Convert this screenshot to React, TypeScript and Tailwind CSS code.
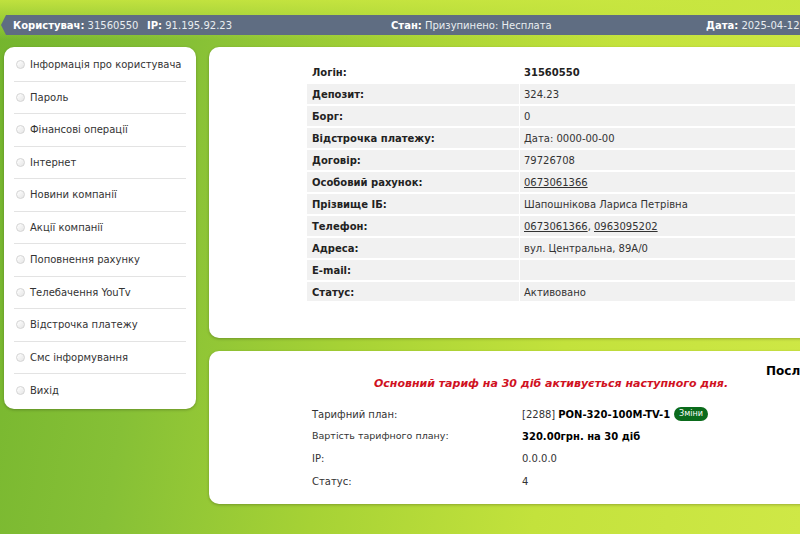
import React from 'react';

const menu = [
  'Інформація про користувача',
  'Пароль',
  'Фінансові операції',
  'Інтернет',
  'Новини компанії',
  'Акції компанії',
  'Поповнення рахунку',
  'Телебачення YouTv',
  'Відстрочка платежу',
  'Смс інформування',
  'Вихід',
];

type Row = { label: string; value: React.ReactNode };

const info: Row[] = [
  { label: 'Депозит:', value: '324.23' },
  { label: 'Борг:', value: '0' },
  { label: 'Відстрочка платежу:', value: 'Дата: 0000-00-00' },
  { label: 'Договір:', value: '79726708' },
  { label: 'Особовий рахунок:', value: <span className="underline">0673061366</span> },
  { label: 'Прізвище ІБ:', value: 'Шапошнікова Лариса Петрівна' },
  {
    label: 'Телефон:',
    value: (
      <span>
        <span className="underline">0673061366</span>, <span className="underline">0963095202</span>
      </span>
    ),
  },
  { label: 'Адреса:', value: 'вул. Центральна, 89А/0' },
  { label: 'E-mail:', value: '' },
  { label: 'Статус:', value: 'Активовано' },
];

function Radio() {
  return (
    <span className="w-[9px] h-[9px] rounded-full border border-[#d4d4d4] bg-gradient-to-br from-white to-[#e6e6e6] shrink-0" />
  );
}

export default function App() {
  return (
    <div
      className="w-[800px] h-[534px] overflow-hidden relative text-[#222]"
      style={{
        fontFamily: '"DejaVu Sans", Verdana, sans-serif',
        background:
          'linear-gradient(180deg, rgba(200,230,64,0.9) 0px, rgba(200,230,64,0) 40px), linear-gradient(100deg, #74b52e 0%, #86c036 22%, #a6d235 45%, #c3e23c 70%, #cfe846 100%)',
      }}
    >
      {/* top bar */}
      <div className="pt-[15px]">
        <div className="h-[20px] bg-[#5f6d82] [clip-path:polygon(6px_0,100%_0,100%_100%,6px_100%,1px_50%)] flex items-center text-[10px] text-[#e9edf1] pl-[13px] whitespace-nowrap">
          <span className="w-[134px] shrink-0">
            <b className="text-white">Користувач:</b> 31560550
          </span>
          <span className="w-[244px] shrink-0">
            <b className="text-white">IP:</b> 91.195.92.23
          </span>
          <span className="w-[315px] shrink-0">
            <b className="text-white">Стан:</b> Призупинено: Несплата
          </span>
          <span className="shrink-0">
            <b className="text-white">Дата:</b> 2025-04-12
          </span>
        </div>
      </div>

      <div className="flex items-start gap-[13px] pl-[4px] pt-[12px]">
        {/* sidebar */}
        <div className="w-[192px] shrink-0 bg-white rounded-[10px] shadow-[0_1px_3px_rgba(0,0,0,0.25)] px-[10px] py-[2px]">
          {menu.map((m, i) => (
            <div
              key={m}
              className={`h-[32.5px] flex items-center gap-[5px] pl-[2px] text-[10px] text-[#333] ${
                i < menu.length - 1 ? 'border-b border-[#e3e3e3]' : ''
              }`}
            >
              <Radio />
              <span>{m}</span>
            </div>
          ))}
        </div>

        <div className="flex flex-col gap-[13px] shrink-0">
          {/* info card */}
          <div className="w-[684px] h-[291px] bg-white rounded-[10px] shadow-[0_1px_3px_rgba(0,0,0,0.25)] pt-[13px] pl-[98px]">
            <div className="w-[488px] h-[241px] overflow-hidden text-[10px]">
              <div className="flex h-[24px] items-center">
                <div className="w-[213px] pl-[5px] font-bold">Логін:</div>
                <div className="pl-[4px] font-bold">31560550</div>
              </div>
              {info.map((r) => (
                <div key={r.label} className="flex h-[20px] mb-[2px] gap-[1px]">
                  <div className="w-[212px] bg-[#f1f1f1] pl-[5px] flex items-center font-bold">{r.label}</div>
                  <div className="flex-1 bg-[#f1f1f1] pl-[4px] flex items-center text-[#333]">{r.value}</div>
                </div>
              ))}
            </div>
          </div>

          {/* tariff card */}
          <div className="w-[684px] h-[153px] bg-white rounded-[10px] shadow-[0_1px_3px_rgba(0,0,0,0.25)] pt-[13px] text-[10px]">
            <div className="pl-[557px] h-[14px] text-[12px] font-bold text-black leading-[14px] whitespace-nowrap">Послуги</div>
            <div className="text-center text-[11px] font-bold italic text-[#d0121f] leading-[12px]">
              Основний тариф на 30 діб активується наступного дня.
            </div>
            <div className="mt-[13px] pl-[103px] text-[#333]">
              <div className="flex h-[22px] items-center">
                <div className="w-[210px]">Тарифний план:</div>
                <div className="flex items-center gap-[3px]">
                  <span>[2288]</span>
                  <b className="text-black">PON-320-100M-TV-1</b>
                  <span className="ml-[1px] bg-[#0b6b1c] text-white text-[8px] rounded-full px-[5px] h-[14px] flex items-center">
                    Зміни
                  </span>
                </div>
              </div>
              <div className="flex h-[22px] items-center">
                <div className="w-[210px] text-[9.5px]">Вартість тарифного плану:</div>
                <b className="text-black">320.00грн. на 30 діб</b>
              </div>
              <div className="flex h-[23px] items-center">
                <div className="w-[210px]">IP:</div>
                <div>0.0.0.0</div>
              </div>
              <div className="flex h-[22px] items-center">
                <div className="w-[210px]">Статус:</div>
                <div>4</div>
              </div>
            </div>
          </div>
        </div>
      </div>
    </div>
  );
}
